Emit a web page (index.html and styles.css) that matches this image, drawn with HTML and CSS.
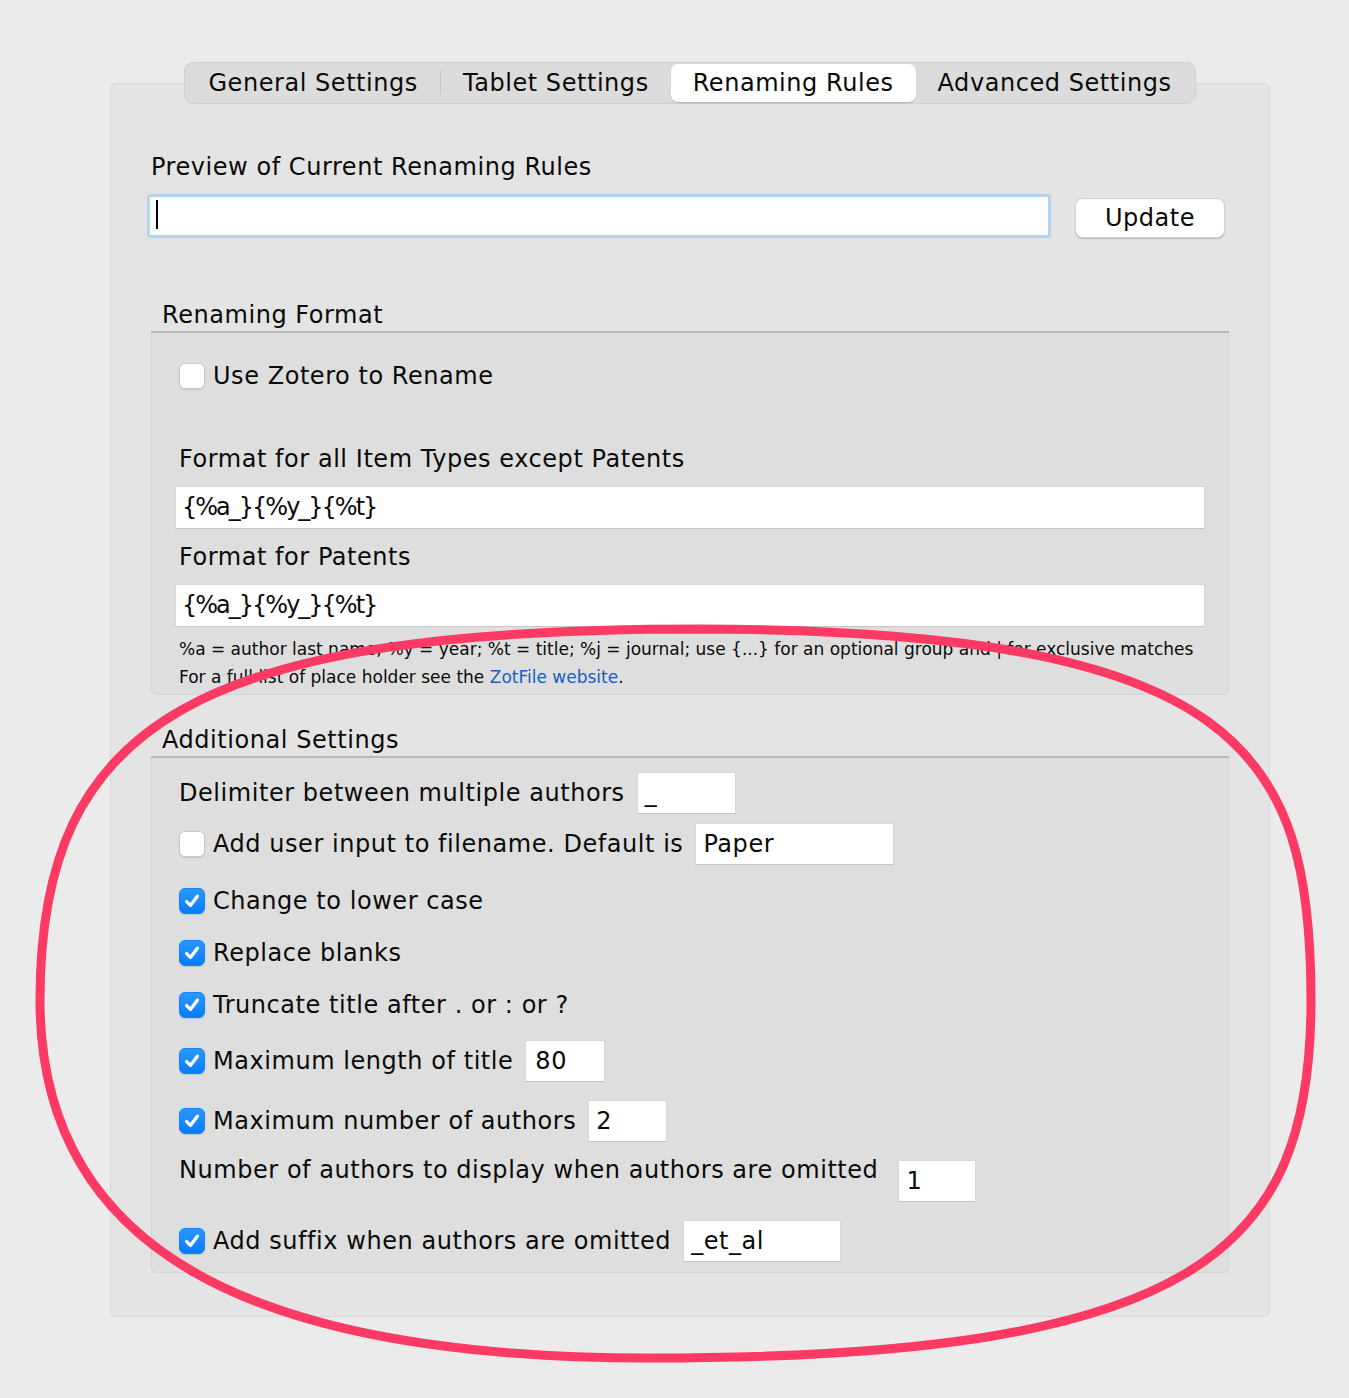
FILE: index.html
```html
<!DOCTYPE html>
<html lang="en">
<head>
<meta charset="utf-8">
<title>ZotFile Preferences – Renaming Rules</title>
<link rel="stylesheet" href="styles.css">
</head>
<body>
<div class="page">
  <div class="tabs-wrap">
    <div class="tabs">
      <div class="tab">General Settings</div>
      <div class="tab-sep"></div>
      <div class="tab">Tablet Settings</div>
      <div class="tab active">Renaming Rules</div>
      <div class="tab">Advanced Settings</div>
    </div>
  </div>

  <div class="panel">
    <div class="heading">Preview of Current Renaming Rules</div>
    <div class="preview-row">
      <div class="preview-input"><span class="caret"></span></div>
      <button class="btn">Update</button>
    </div>

    <div class="section-title first">Renaming Format</div>
    <div class="rule"></div>
    <div class="group group-format">
      <div class="check-row">
        <span class="cb"></span><span class="label">Use Zotero to Rename</span>
      </div>
      <div class="field-label first">Format for all Item Types except Patents</div>
      <div class="text-field wide"><span class="pattern">{%a_}{%y_}{%t}</span></div>
      <div class="field-label">Format for Patents</div>
      <div class="text-field wide"><span class="pattern">{%a_}{%y_}{%t}</span></div>
      <div class="notes">
        <div>%a = author last name; %y = year; %t = title; %j = journal; use {...} for an optional group and | for exclusive matches</div>
        <div>For a full list of place holder see the <span class="link">ZotFile website</span>.</div>
      </div>
    </div>

    <div class="section-title second">Additional Settings</div>
    <div class="rule"></div>
    <div class="group group-additional">
      <div class="row r1">
        <span class="label plain">Delimiter between multiple authors</span>
        <div class="text-field w99">_</div>
      </div>
      <div class="row r2">
        <span class="cb"></span><span class="label">Add user input to filename. Default is</span>
        <div class="text-field w199">Paper</div>
      </div>
      <div class="row r3">
        <span class="cb checked"><svg viewBox="0 0 26 26"><path d="M7.2 13.6 L11.3 17.8 L18.8 7.8"/></svg></span><span class="label">Change to lower case</span>
      </div>
      <div class="row r4">
        <span class="cb checked"><svg viewBox="0 0 26 26"><path d="M7.2 13.6 L11.3 17.8 L18.8 7.8"/></svg></span><span class="label">Replace blanks</span>
      </div>
      <div class="row r5">
        <span class="cb checked"><svg viewBox="0 0 26 26"><path d="M7.2 13.6 L11.3 17.8 L18.8 7.8"/></svg></span><span class="label">Truncate title after . or : or ?</span>
      </div>
      <div class="row r6">
        <span class="cb checked"><svg viewBox="0 0 26 26"><path d="M7.2 13.6 L11.3 17.8 L18.8 7.8"/></svg></span><span class="label">Maximum length of title</span>
        <div class="text-field w80">80</div>
      </div>
      <div class="row r7">
        <span class="cb checked"><svg viewBox="0 0 26 26"><path d="M7.2 13.6 L11.3 17.8 L18.8 7.8"/></svg></span><span class="label">Maximum number of authors</span>
        <div class="text-field w79">2</div>
      </div>
      <div class="row r8">
        <span class="label plain raised">Number of authors to display when authors are omitted</span>
        <div class="text-field w78 far">1</div>
      </div>
      <div class="row r9">
        <span class="cb checked"><svg viewBox="0 0 26 26"><path d="M7.2 13.6 L11.3 17.8 L18.8 7.8"/></svg></span><span class="label">Add suffix when authors are omitted</span>
        <div class="text-field w158">_et_al</div>
      </div>
    </div>
  </div>

  <svg class="annotation" viewBox="0 0 1349 1398" width="1349" height="1398">
    <path d="M700 629 C1240 631 1311 750 1311 1000 C1311 1250 1200 1358 650 1358 C250 1358 40 1250 40 1000 C40 720 200 629 700 629 Z"/>
  </svg>
</div>
</body>
</html>
```
FILE: styles.css
```css
* { box-sizing: border-box; }

html, body {
  margin: 0;
  padding: 0;
  background: #ebebeb;
}

body {
  font-family: "DejaVu Sans", "Lucida Grande", sans-serif;
  font-size: 24px;
  letter-spacing: 0.55px;
  color: #0a0a0a;
}

.page {
  position: relative;
  width: 1349px;
  height: 1398px;
  padding-top: 62px;
}

/* Tabs */
.tabs-wrap {
  position: relative;
  z-index: 1;
  display: flex;
  justify-content: center;
  margin: 0 79px -21px 110px;
}

.tabs {
  display: flex;
  align-items: center;
  background: #dcdcdc;
  border: 1px solid #d0d0d0;
  border-radius: 9px;
  padding: 1px;
  height: 42px;
}

.tab {
  height: 38px;
  line-height: 38px;
  padding: 0 22px;
  white-space: nowrap;
}

.tab.active {
  background: #ffffff;
  border-radius: 7px;
  box-shadow: 0 1px 1px rgba(0, 0, 0, 0.18);
}

.tab-sep {
  width: 1px;
  height: 24px;
  background: #c6c6c6;
}

/* Panel */
.panel {
  margin: 0 79px 0 110px;
  background: #e4e4e4;
  border: 1px solid #d9d9d9;
  border-radius: 6px;
  padding: 68px 40px 43px 40px;
}

.heading {
  line-height: 30px;
  margin-bottom: 12px;
}

.preview-row {
  display: flex;
  justify-content: space-between;
  align-items: flex-end;
  margin-left: -4px;
  padding-right: 4px;
}

.preview-input {
  width: 904px;
  height: 44px;
  background: #ffffff;
  border: 3px solid #b1d4f3;
  border-radius: 4px;
  padding: 3px 0 0 6px;
}

.caret {
  display: block;
  width: 2px;
  height: 29px;
  background: #000;
}

.btn {
  width: 150px;
  height: 40px;
  font-family: inherit;
  font-size: 24px;
  letter-spacing: 0.55px;
  color: #0a0a0a;
  background: #ffffff;
  border: 1px solid #d2d2d2;
  border-radius: 8px;
  box-shadow: 0 1px 1px rgba(0, 0, 0, 0.2);
  padding: 0;
}

.section-title {
  line-height: 32px;
  padding-left: 11px;
}

.section-title.first { margin-top: 61px; }
.section-title.second { margin-top: 29px; }

.rule {
  height: 2px;
  background: #b9b9b9;
}

.group {
  background: #dedede;
  border: 1px solid #d4d4d4;
  border-top: none;
  border-radius: 0 0 6px 6px;
}

.group-format {
  padding: 27px 23px 3px 23px;
}

.check-row {
  display: flex;
  align-items: center;
  height: 30px;
  margin-top: 1px;
  margin-left: 4px;
}

.cb {
  flex: none;
  width: 26px;
  height: 26px;
  border-radius: 6px;
  background: #ffffff;
  border: 1px solid #cbcbcb;
  box-shadow: 0 0.5px 1px rgba(0, 0, 0, 0.12);
  margin-right: 8px;
  display: flex;
  align-items: center;
  justify-content: center;
}

.cb.checked {
  background: linear-gradient(#2a98ff, #087bff);
  border-color: #1683f7;
}

.cb svg {
  width: 26px;
  height: 26px;
}

.cb svg path {
  fill: none;
  stroke: #ffffff;
  stroke-width: 3.6;
  stroke-linecap: round;
  stroke-linejoin: round;
}

.label {
  white-space: nowrap;
  line-height: 30px;
}

.field-label {
  line-height: 30px;
  margin-left: 4px;
  margin-top: 13px;
}

.field-label.first { margin-top: 53px; }

.text-field {
  height: 42px;
  line-height: 40px;
  background: #ffffff;
  border: 1px solid #d8d8d8;
  border-bottom-color: #c5c5c5;
  padding: 0 7px;
  white-space: nowrap;
  flex: none;
}

.text-field.wide {
  height: 43px;
  line-height: 41px;
  margin-top: 12px;
  padding-left: 6px;
}

.pattern {
  letter-spacing: -2px;
}

.notes {
  font-size: 17px;
  letter-spacing: 0;
  line-height: 28px;
  margin-top: 8px;
  margin-left: 4px;
  white-space: nowrap;
}

.link { color: #1560c3; }

/* Additional settings */
.group-additional {
  padding: 14px 23px 10px 27px;
}

.row {
  display: flex;
  align-items: center;
  height: 42px;
}

.row .text-field { margin-left: 12px; }

.r2 { margin-top: 9px; }
.r3 { margin-top: 15px; }
.r4 { margin-top: 10px; }
.r5 { margin-top: 10px; }
.r6 { margin-top: 14px; }
.r7 { margin-top: 18px; }
.r8 { margin-top: 18px; align-items: flex-start; }
.r9 { margin-top: 18px; }

.raised { margin-top: -5px; }
.row .text-field.far { margin-left: 20px; }

.w99 { width: 99px; }
.w199 { width: 199px; }
.w80 { width: 80px; padding-left: 9px; }
.w79 { width: 79px; }
.w78 { width: 78px; }
.w158 { width: 158px; }

/* Hand-drawn annotation */
.annotation {
  position: absolute;
  left: 0;
  top: 0;
  pointer-events: none;
}

.annotation path {
  fill: none;
  stroke: #fd3a64;
  stroke-width: 9;
  stroke-linecap: round;
}
```
